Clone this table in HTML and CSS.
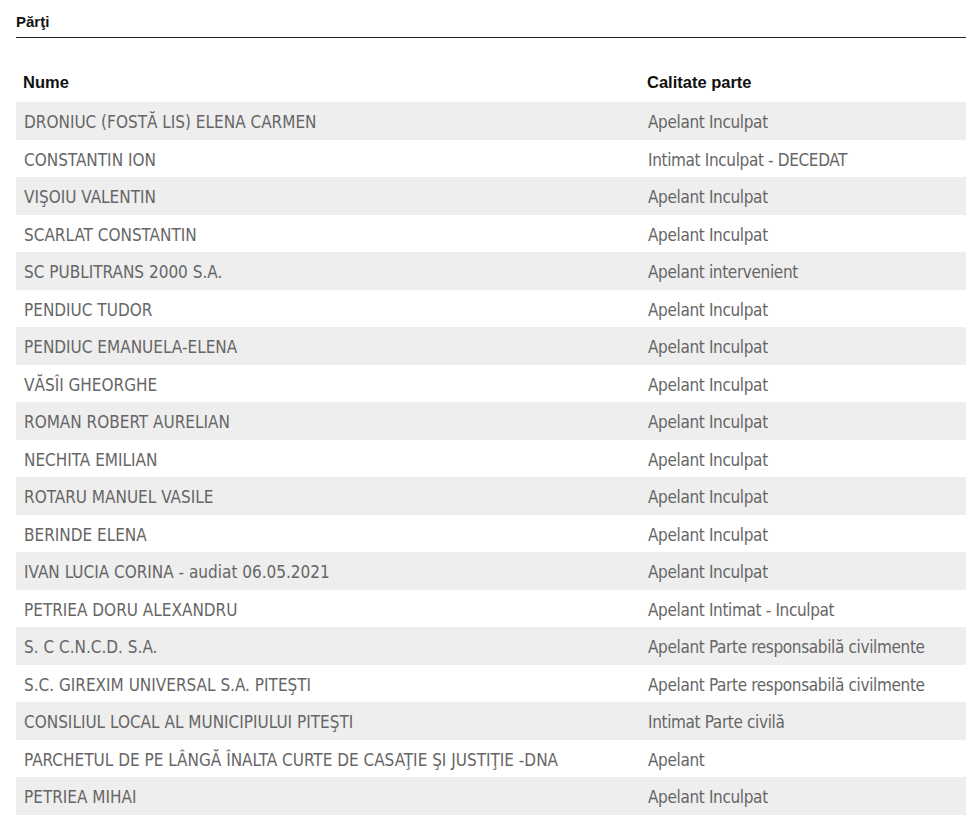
FILE: index.html
```html
<!DOCTYPE html>
<html lang="ro">
<head>
<meta charset="utf-8">
<title>Părţi</title>
<link rel="stylesheet" href="styles.css">
</head>
<body>
<div class="wrap">
  <h2 class="title">Părţi</h2>
  <table class="parti">
    <thead>
      <tr><th class="c1">Nume</th><th class="c2">Calitate parte</th></tr>
    </thead>
    <tbody>
      <tr><td>DRONIUC (FOSTĂ LIS) ELENA CARMEN</td><td class="q">Apelant Inculpat</td></tr>
      <tr><td>CONSTANTIN ION</td><td class="q">Intimat Inculpat - DECEDAT</td></tr>
      <tr><td>VIŞOIU VALENTIN</td><td class="q">Apelant Inculpat</td></tr>
      <tr><td>SCARLAT CONSTANTIN</td><td class="q">Apelant Inculpat</td></tr>
      <tr><td>SC PUBLITRANS 2000 S.A.</td><td class="q">Apelant intervenient</td></tr>
      <tr><td>PENDIUC TUDOR</td><td class="q">Apelant Inculpat</td></tr>
      <tr><td>PENDIUC EMANUELA-ELENA</td><td class="q">Apelant Inculpat</td></tr>
      <tr><td>VĂSÎI GHEORGHE</td><td class="q">Apelant Inculpat</td></tr>
      <tr><td>ROMAN ROBERT AURELIAN</td><td class="q">Apelant Inculpat</td></tr>
      <tr><td>NECHITA EMILIAN</td><td class="q">Apelant Inculpat</td></tr>
      <tr><td>ROTARU MANUEL VASILE</td><td class="q">Apelant Inculpat</td></tr>
      <tr><td>BERINDE ELENA</td><td class="q">Apelant Inculpat</td></tr>
      <tr><td>IVAN LUCIA CORINA - audiat 06.05.2021</td><td class="q">Apelant Inculpat</td></tr>
      <tr><td>PETRIEA DORU ALEXANDRU</td><td class="q">Apelant Intimat - Inculpat</td></tr>
      <tr><td>S. C C.N.C.D. S.A.</td><td class="q">Apelant Parte responsabilă civilmente</td></tr>
      <tr><td>S.C. GIREXIM UNIVERSAL S.A. PITEŞTI</td><td class="q">Apelant Parte responsabilă civilmente</td></tr>
      <tr><td>CONSILIUL LOCAL AL MUNICIPIULUI PITEŞTI</td><td class="q">Intimat Parte civilă</td></tr>
      <tr><td>PARCHETUL DE PE LÂNGĂ ÎNALTA CURTE DE CASAŢIE ŞI JUSTIŢIE -DNA</td><td class="q">Apelant</td></tr>
      <tr><td>PETRIEA MIHAI</td><td class="q">Apelant Inculpat</td></tr>
    </tbody>
  </table>
</div>
</body>
</html>
```
FILE: styles.css
```css
html, body {
  margin: 0;
  padding: 0;
  background: #ffffff;
}
.wrap {
  padding: 12px 14px 0 16px;
}
.title {
  margin: 0;
  font-family: "Liberation Sans", Arial, sans-serif;
  font-weight: bold;
  font-size: 15px;
  line-height: 20px;
  color: #111;
  padding-bottom: 5px;
  border-bottom: 1px solid #222;
}
.parti {
  width: 100%;
  border-collapse: collapse;
  margin-top: 29px;
}
.parti th {
  text-align: left;
  font-family: "Liberation Sans", Arial, sans-serif;
  font-weight: bold;
  font-size: 16.5px;
  color: #111;
  height: 31px;
  padding: 0 0 4px 7px;
  vertical-align: middle;
}
.parti th.c2 {
  width: 319px;
}
.parti td {
  font-family: "DejaVu Sans Condensed", "DejaVu Sans", sans-serif;
  font-size: 17px;
  color: #666;
  height: 34.5px;
  padding: 3px 0 0 8px;
  vertical-align: middle;
}
.parti td.q {
  letter-spacing: -0.35px;
}
.parti tbody tr:nth-child(odd) td {
  background: #eeeeee;
}
```
